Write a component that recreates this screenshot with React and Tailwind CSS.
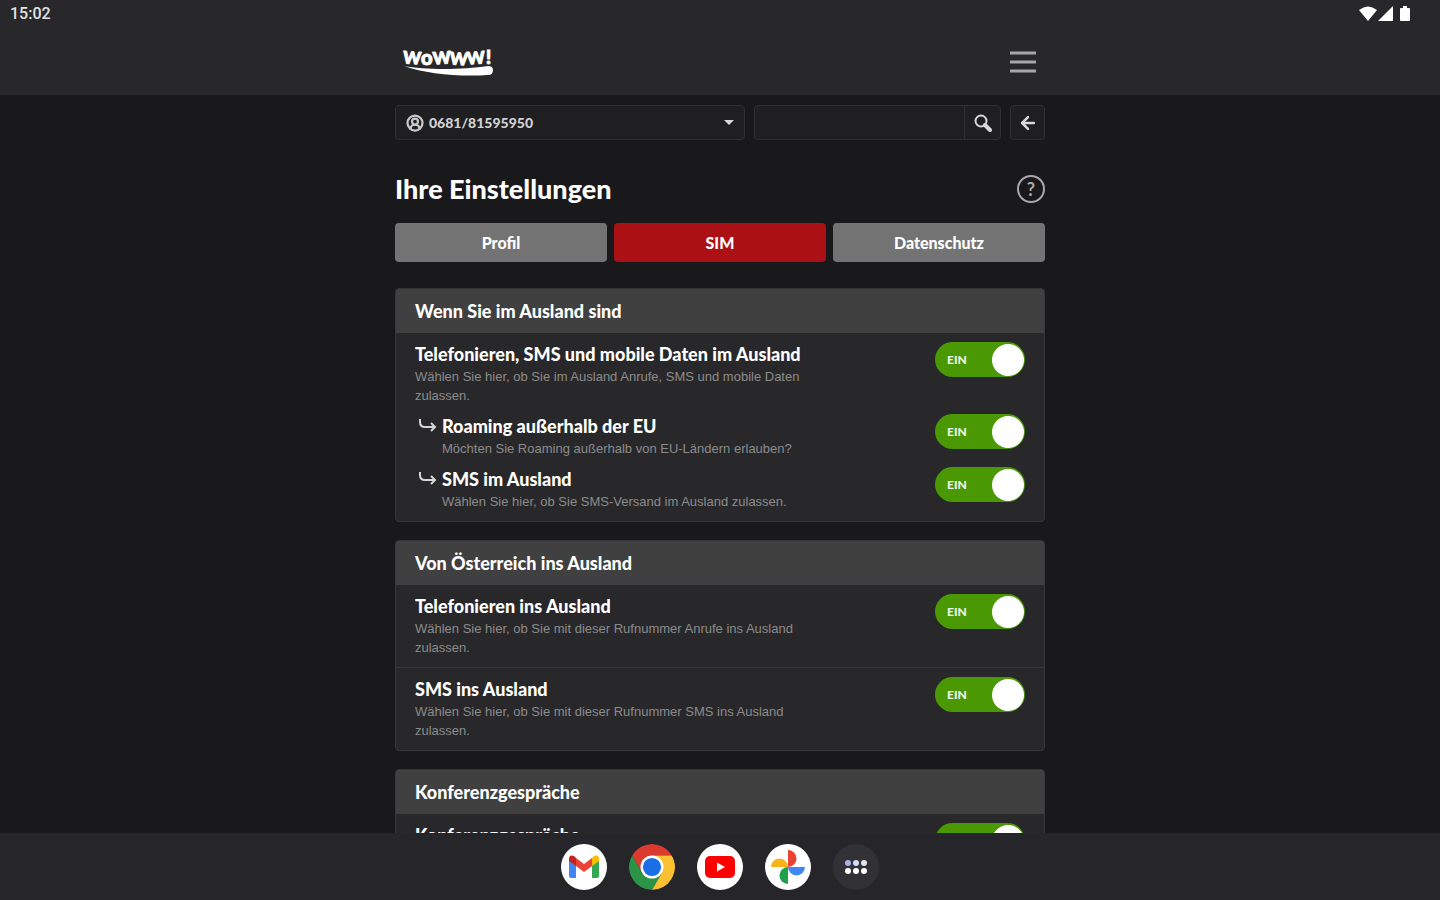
// App.jsx - Account settings (SIM tab) on a tablet

import React, { useState } from 'react';
import { ArrowLeft, CircleUserRound } from 'lucide-react';

const TABS = ['Profil', 'SIM', 'Datenschutz'];

const SECTIONS = [
    {
        title: 'Wenn Sie im Ausland sind',
        rows: [
            {
                id: 'roaming',
                title: 'Telefonieren, SMS und mobile Daten im Ausland',
                text: 'Wählen Sie hier, ob Sie im Ausland Anrufe, SMS und mobile Daten zulassen.',
                children: [
                    {
                        id: 'roaming-non-eu',
                        title: 'Roaming außerhalb der EU',
                        text: 'Möchten Sie Roaming außerhalb von EU-Ländern erlauben?'
                    },
                    {
                        id: 'roaming-sms',
                        title: 'SMS im Ausland',
                        text: 'Wählen Sie hier, ob Sie SMS-Versand im Ausland zulassen.'
                    }
                ]
            }
        ]
    },
    {
        title: 'Von Österreich ins Ausland',
        rows: [
            {
                id: 'calls-abroad',
                title: 'Telefonieren ins Ausland',
                text: 'Wählen Sie hier, ob Sie mit dieser Rufnummer Anrufe ins Ausland zulassen.'
            },
            {
                id: 'sms-abroad',
                title: 'SMS ins Ausland',
                text: 'Wählen Sie hier, ob Sie mit dieser Rufnummer SMS ins Ausland zulassen.'
            }
        ]
    },
    {
        title: 'Konferenzgespräche',
        rows: [
            {
                id: 'conference',
                title: 'Konferenzgespräche',
                text: 'Wählen Sie hier, ob Sie Konferenzgespräche zulassen.'
            }
        ]
    }
];

function Logo() {
    return (
        <svg viewBox="0 0 92 34" className="w-[92px] h-[34px] overflow-visible" role="img" aria-label="WOWWW!">
            <g fill="#fff" stroke="#fff" strokeWidth="1" fontFamily="Lato, sans-serif" fontWeight="900">
                <text x="1" y="19" fontSize="17" transform="rotate(4 10 14)">W</text>
                <text x="19" y="20" fontSize="20">o</text>
                <text x="31" y="19" fontSize="17" transform="rotate(-4 40 14)">W</text>
                <text x="48" y="20" fontSize="17" transform="rotate(4 57 14)">W</text>
                <text x="65" y="19" fontSize="17" transform="rotate(-4 74 14)">W</text>
                <text x="84" y="19" fontSize="18">!</text>
            </g>
            <path d="M2 21 C22 25 60 25 86 21 Q91 21 91 25 Q91 30 86 30 C58 32 24 29 2 21Z" fill="#fff" />
        </svg>
    );
}

function StatusBar() {
    return (
        <div className="h-7 pl-2.5 pr-[29px] flex items-center justify-between">
            <span className="font-[Roboto,sans-serif] text-base font-medium text-[#e2e2e2]">15:02</span>
            <svg viewBox="0 0 52 18" className="w-[52px] h-[18px]" fill="#fff" aria-hidden="true">
                <path d="M0 5 Q9 -2 18 5 L9 16Z" />
                <path d="M34 1 V16 H19Z" />
                <path d="M42 3 H44 V1 H48 V3 H50 Q51 3 51 4 V15 Q51 16 50 16 H42 Q41 16 41 15 V4 Q41 3 42 3Z" />
            </svg>
        </div>
    );
}

function Toggle({ id, label }) {
    const [on, setOn] = useState(true);

    return (
        <label
            htmlFor={id}
            className={`relative shrink-0 w-[90px] h-[35px] px-px rounded-full flex items-center justify-between cursor-pointer ${on ? 'bg-[#4b9805]' : 'bg-[#737373] flex-row-reverse'}`}
        >
            <input
                id={id}
                type="checkbox"
                role="switch"
                aria-label={label}
                checked={on}
                onChange={() => setOn(!on)}
                className="sr-only"
            />
            <span className="px-[11px] text-xs font-black text-[#eef5e8]">{on ? 'EIN' : 'AUS'}</span>
            <span className="w-8 h-8 rounded-full bg-white" />
        </label>
    );
}

function SettingRow({ row, nested }) {
    return (
        <div className={`pt-[9px] pr-[19px] flex items-start justify-between ${nested ? 'pl-[23px]' : 'pl-[19px]'}`}>
            <div className="flex items-start">
                {nested && (
                    <svg viewBox="0 0 18 14" className="w-[18px] h-3.5 mt-1 mr-[5px]" fill="none" stroke="#d6d6d6" strokeWidth="2" aria-hidden="true">
                        <path d="M1 1 V4 Q1 9 6 9 H16 M12 5 L16 9 L12 13" />
                    </svg>
                )}
                <div className="max-w-[410px]">
                    <h3 className="text-lg leading-[25px] font-black text-white">{row.title}</h3>
                    <p className="font-['Liberation_Sans',sans-serif] text-[13px] leading-[19px] text-[#8b8b8c]">{row.text}</p>
                </div>
            </div>
            <Toggle id={row.id} label={row.title} />
        </div>
    );
}

function Section({ section }) {
    return (
        <section className="border border-[#363638] rounded bg-[#28282a] overflow-hidden">
            <h2 className="h-11 px-[19px] flex items-center bg-[#404040] text-lg font-black text-white">
                {section.title}
            </h2>
            <div className="divide-y divide-[#363638]">
                {section.rows.map((row) => (
                    <div key={row.id} className="pb-2.5">
                        <SettingRow row={row} />
                        {row.children && row.children.map((child) => (
                            <SettingRow key={child.id} row={child} nested />
                        ))}
                    </div>
                ))}
            </div>
        </section>
    );
}

function Dock() {
    const app = 'w-[46px] h-[46px] rounded-full overflow-hidden flex items-center justify-center cursor-pointer';

    return (
        <nav aria-label="Apps" className="shrink-0 h-[67px] bg-[#25252a] flex items-center justify-center gap-[22px]">
            <button aria-label="Gmail" className={`${app} bg-white`}>
                <svg viewBox="0 0 30 24" className="w-[30px] h-6">
                    <path d="M0 4 L7 9 V23 H2 Q0 23 0 21Z" fill="#4285f4" />
                    <path d="M23 9 L30 4 V21 Q30 23 28 23 H23Z" fill="#34a853" />
                    <path d="M23 3 L25 1 Q30 -1 30 4 V6 L23 11Z" fill="#fbbc04" />
                    <path d="M0 6 V4 Q0 -1 5 1 L7 3 V11Z" fill="#c5221f" />
                    <path d="M7 3 L15 9 L23 3 V11 L15 17 L7 11Z" fill="#ea4335" />
                </svg>
            </button>
            <button aria-label="Chrome" className={app}>
                <svg viewBox="0 0 48 48" className="w-full h-full">
                    <path d="M3.2 12 A24 24 0 0 1 44.8 12 H24 L13.6 30Z" fill="#db3a2f" />
                    <path d="M3.2 12 L13.6 30 L24 36 L34.4 30 L24 48 A24 24 0 0 1 3.2 12Z" fill="#2b9447" />
                    <path d="M34.4 30 L24 48 A24 24 0 0 0 44.8 12 H24Z" fill="#fcc031" />
                    <circle cx="24" cy="24" r="12" fill="#fff" />
                    <circle cx="24" cy="24" r="9.5" fill="#1a6fe6" />
                </svg>
            </button>
            <button aria-label="YouTube" className={`${app} bg-white`}>
                <svg viewBox="0 0 32 22" className="w-8 h-[22px]">
                    <rect x="1" y="0" width="30" height="22" rx="5" fill="#f00" />
                    <path d="M13 6.500 L21 11 L13 15.500Z" fill="#fff" />
                </svg>
            </button>
            <button aria-label="Fotos" className={`${app} bg-white`}>
                <svg viewBox="0 0 34 34" className="w-[34px] h-[34px]">
                    <path d="M17 0 A8.500 8.500 0 0 1 17 17Z" fill="#ea4335" />
                    <path d="M34 17 A8.500 8.500 0 0 1 17 17Z" fill="#4285f4" />
                    <path d="M17 34 A8.500 8.500 0 0 1 17 17Z" fill="#1fa04b" />
                    <path d="M0 17 A8.500 8.500 0 0 1 17 17Z" fill="#fbb31a" />
                </svg>
            </button>
            <button aria-label="Alle Apps" className={`${app} bg-[#313136]`}>
                <svg viewBox="0 0 24 16" className="w-6 h-4">
                    <circle cx="4" cy="4" r="3" fill="#a9b4e6" />
                    <circle cx="12" cy="4" r="3" fill="#d5dbf5" />
                    <circle cx="20" cy="4" r="3" fill="#e3e3ea" />
                    <circle cx="4" cy="12" r="3" fill="#fff" />
                    <circle cx="12" cy="12" r="3" fill="#fff" />
                    <circle cx="20" cy="12" r="3" fill="#fff" />
                </svg>
            </button>
        </nav>
    );
}

function App() {
    const [tab, setTab] = useState('SIM');

    return (
        <div className="h-screen flex flex-col overflow-hidden bg-[#19191b] font-[Lato,sans-serif]">
            {/* Status bar and header */}
            <header className="shrink-0 bg-[#28282a]">
                <StatusBar />
                <div className="max-w-[650px] h-[67px] mx-auto pl-[7px] pr-[9px] flex items-center justify-between">
                    <a href="#start"><Logo /></a>
                    <button aria-label="Menü" className="cursor-pointer">
                        <svg viewBox="0 0 26 22" className="w-[26px] h-[22px]" stroke="#a6a6a6" strokeWidth="3">
                            <path d="M0 2 H26 M0 11 H26 M0 20 H26" />
                        </svg>
                    </button>
                </div>
            </header>

            <main className="flex-1 min-h-0 overflow-hidden">
                <div className="max-w-[650px] mx-auto pt-2.5">
                    {/* Number picker and search */}
                    <div className="flex gap-[9px]">
                        <label className="w-[350px] h-[35px] px-2.5 border border-[#303032] rounded bg-[#1f1f21] flex items-center">
                            <CircleUserRound className="w-[18px] h-[18px] mr-[5px] text-[#c8c8c8]" strokeWidth={3} />
                            <select aria-label="Rufnummer" className="flex-1 appearance-none bg-transparent text-sm font-black text-[#d2d2d2] outline-none">
                                <option>0681/81595950</option>
                            </select>
                            <svg viewBox="0 0 10 5" className="w-2.5 h-[5px]" fill="#d8d8d8" aria-hidden="true">
                                <path d="M0 0 H10 L5 5Z" />
                            </svg>
                        </label>
                        <form className="flex-1 h-[35px] border border-[#303032] rounded bg-[#1f1f21] flex" onSubmit={(e) => e.preventDefault()}>
                            <input type="search" aria-label="Suche" className="flex-1 min-w-0 px-3 bg-transparent text-sm text-white outline-none" />
                            <button aria-label="Suchen" className="w-9 border-l border-[#303032] flex items-center justify-center cursor-pointer">
                                <svg viewBox="0 0 18 18" className="w-[18px] h-[18px]" fill="none" stroke="#d8d8d8">
                                    <circle cx="7" cy="7" r="5.500" strokeWidth="2" />
                                    <path d="M11 11 L16 16" strokeWidth="4" strokeLinecap="round" />
                                </svg>
                            </button>
                        </form>
                        <button aria-label="Zurück" className="w-[35px] h-[35px] border border-[#303032] rounded bg-[#1f1f21] flex items-center justify-center cursor-pointer">
                            <ArrowLeft className="w-5 h-5 text-[#d8d8d8]" strokeWidth={3} />
                        </button>
                    </div>

                    <div className="mt-[34px] mb-[19px] h-[30px] flex items-center justify-between">
                        <h1 className="text-[27px] leading-[30px] font-black text-white">Ihre Einstellungen</h1>
                        <button aria-label="Hilfe" className="w-7 h-7 border-2 border-[#a8a8a8] rounded-full flex items-center justify-center text-lg leading-none font-bold text-[#a8a8a8] cursor-pointer">
                            ?
                        </button>
                    </div>

                    {/* Tabs */}
                    <div role="tablist" className="grid grid-cols-3 gap-[7px] mb-[26px]">
                        {TABS.map((name) => (
                            <button
                                key={name}
                                role="tab"
                                aria-selected={tab === name}
                                onClick={() => setTab(name)}
                                className={`h-[39px] rounded text-base font-black text-white cursor-pointer ${tab === name ? 'bg-[#aa1014]' : 'bg-[#737373]'}`}
                            >
                                {name}
                            </button>
                        ))}
                    </div>

                    <div className="flex flex-col gap-[18px]">
                        {SECTIONS.map((section) => (
                            <Section key={section.title} section={section} />
                        ))}
                    </div>
                </div>
            </main>

            <Dock />
        </div>
    );
}

export default App;
